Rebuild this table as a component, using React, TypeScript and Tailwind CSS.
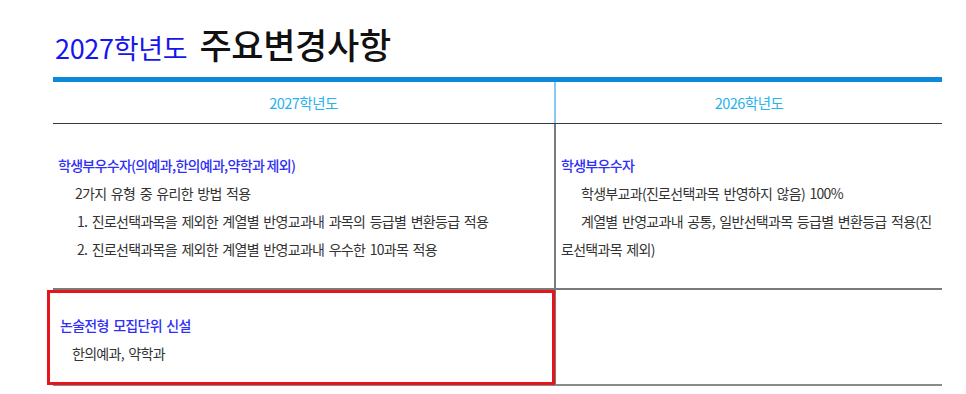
import React from "react";

const font = { fontFamily: '"Noto Sans CJK KR", "Noto Sans", sans-serif' };

const App: React.FC = () => {
  return (
    <div
      className="w-[966px] h-[394px] bg-white overflow-hidden text-[#333]"
      style={font}
    >
      {/* title */}
      <div className="h-[77px] pl-[55px] pt-[18px] flex items-baseline gap-[12px]">
        <span className="text-[27px] text-[#1515f0] tracking-[-0.3px]">2027학년도</span>
        <span className="text-[35px] font-medium text-[#111] tracking-[-0.3px]">주요변경사항</span>
      </div>

      {/* table */}
      <div className="ml-[53px] w-[889px] border-t-[5px] border-[#0a8ad8]">
        <div className="grid grid-cols-[503px_386px] h-[42px] border-b border-[#3a3a3a] text-[14.5px] text-[#27b3ec] tracking-[-0.5px]">
          <div className="flex items-center justify-center border-r-2 border-[#86c8ef]">2027학년도</div>
          <div className="flex items-center justify-center">2026학년도</div>
        </div>

        <div className="grid grid-cols-[503px_386px] h-[166px] border-b-2 border-[#7a7a7a] text-[14px] leading-[28px] tracking-[-0.7px] [word-spacing:2px]">
          <div className="border-r-2 border-[#7a7a7a] pt-[27px] pl-[5px]">
            <div className="text-[#2f2ff5] font-medium [word-spacing:0px]">학생부우수자(의예과,한의예과,약학과 제외)</div>
            <div className="pl-[17px]">2가지 유형 중 유리한 방법 적용</div>
            <div className="pl-[19px]">1. 진로선택과목을 제외한 계열별 반영교과내 과목의 등급별 변환등급 적용</div>
            <div className="pl-[19px]">2. 진로선택과목을 제외한 계열별 반영교과내 우수한 10과목 적용</div>
          </div>
          <div className="pt-[27px] pl-[5px]">
            <div className="text-[#2f2ff5] font-medium">학생부우수자</div>
            <div className="pl-[20px]">학생부교과(진로선택과목 반영하지 않음) 100%</div>
            <div className="pl-[20px] whitespace-nowrap">계열별 반영교과내 공통, 일반선택과목 등급별 변환등급 적용(진</div>
            <div>로선택과목 제외)</div>
          </div>
        </div>

        <div className="grid grid-cols-[503px_386px] h-[96px] border-b-2 border-[#8a8a8a] text-[14px] leading-[28px] tracking-[-0.7px] [word-spacing:2px]">
          <div className="relative border-r-2 border-[#7a7a7a] pt-[21px] pl-[7px]">
            <div className="absolute -left-[6px] top-0 -right-[1px] -bottom-[1px] border-[3px] border-[#e8141b]" />
            <div className="text-[#2f2ff5] font-medium">논술전형 모집단위 신설</div>
            <div className="pl-[12px]">한의예과, 약학과</div>
          </div>
          <div />
        </div>
      </div>
    </div>
  );
};

export default App;
